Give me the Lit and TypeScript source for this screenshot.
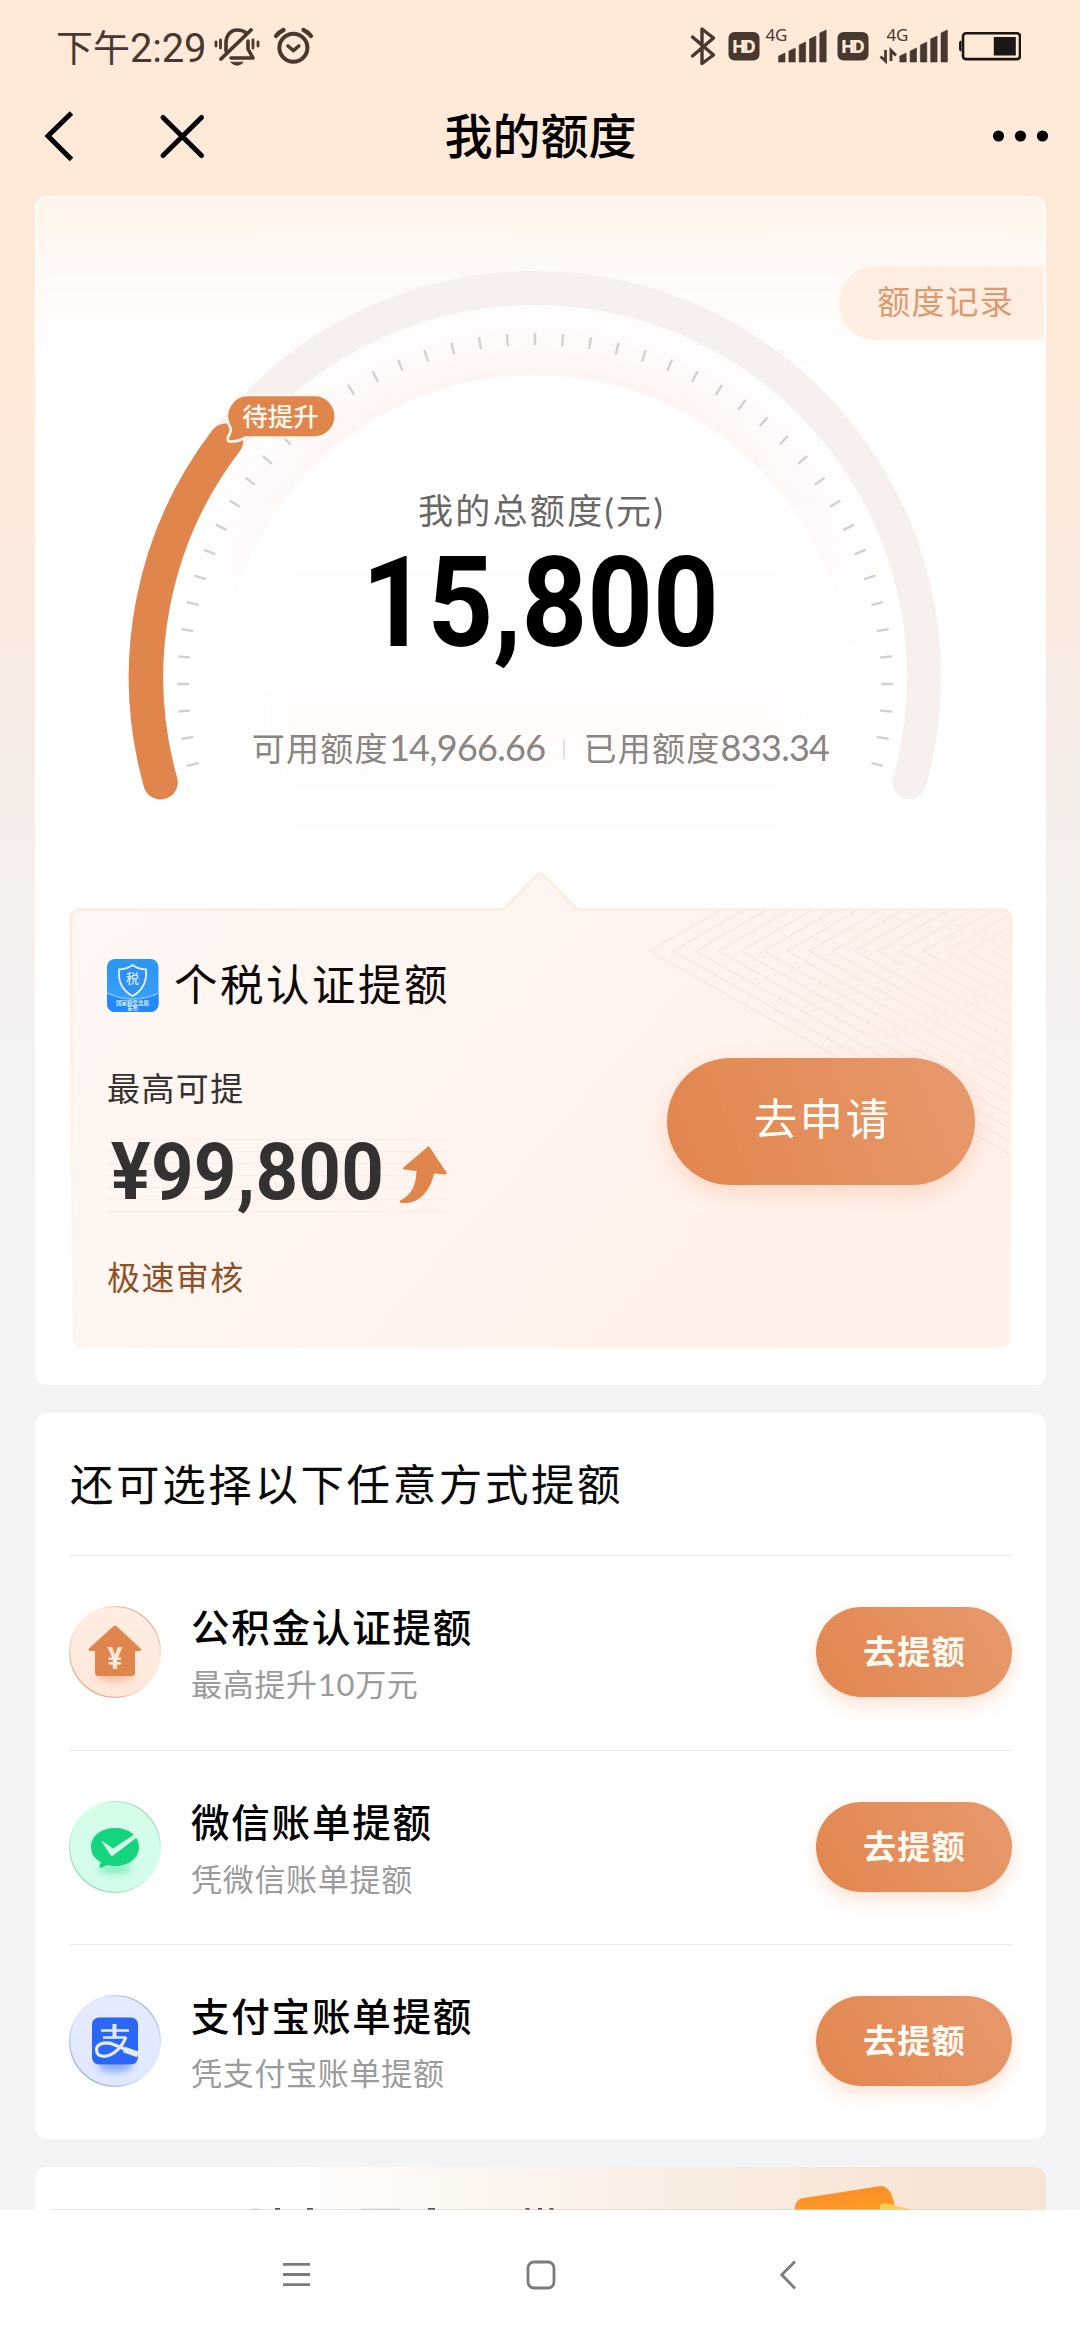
import { LitElement, html, svg, css } from "lit";
import { customElement, property } from "lit/decorators.js";

interface Way {
  icon: "house" | "wechat" | "alipay";
  title: string;
  desc: string;
}

const WAYS: Way[] = [
  { icon: "house", title: "公积金认证提额", desc: "最高提升10万元" },
  { icon: "wechat", title: "微信账单提额", desc: "凭微信账单提额" },
  { icon: "alipay", title: "支付宝账单提额", desc: "凭支付宝账单提额" },
];

const CJK = css`"Noto Sans CJK SC", sans-serif`;

@customElement("status-bar")
class StatusBar extends LitElement {
  static styles = css`
    :host {
      display: flex;
      justify-content: space-between;
      align-items: center;
      height: 94px;
      padding: 0 59px 0 56px;
      color: #47392f;
    }
    .left,
    .right {
      display: flex;
      align-items: center;
    }
    .time {
      display: flex;
      align-items: baseline;
      width: 150px;
      white-space: nowrap;
      font: 400 37px/44px ${CJK};
    }
    .digits {
      font: 400 40px/44px Roboto, sans-serif;
      letter-spacing: -0.2px;
    }
    svg {
      display: block;
    }
    .hd {
      font: 800 17px Inter, sans-serif;
    }
    .net {
      font: 400 17px "Noto Sans", sans-serif;
    }
  `;

  bars(x: number) {
    return [0, 1, 2, 3, 4].map((i) => {
      const l = x + i * 10.3;
      const top = [56, 51, 45, 39, 33][i];
      return svg`<path d="M${l} 63V${top + 1}L${l + 6.4} ${top - 2}V63Z"
        fill="currentColor" stroke="currentColor" stroke-width="0.6" stroke-linejoin="round"/>`;
    });
  }

  render() {
    return html`
      <div class="left">
        <div class="time">下午<span class="digits">2:29</span></div>
        <svg width="112" height="48" viewBox="206 24 112 48" fill="none" stroke="currentColor" stroke-linecap="round">
          <path d="M226 52V44C226 36 231 31 237 31Q243 31 246 34" stroke-width="3.6" />
          <path d="M248 42V50L253 59H231" stroke-width="3.6" stroke-linejoin="round" />
          <path d="M251 31L221 60" stroke-width="3.8" />
          <path d="M231 63.5Q237 69 243 63.5Z" fill="currentColor" stroke-width="1" />
          <path d="M216 43v4M220.5 41v8M258 43v4M253 41v8" stroke-width="2.8" />
          <circle cx="293.4" cy="48.7" r="14" stroke-width="4" />
          <path d="M288 47l5.4 4.6 5.4-4.6" stroke-width="3.6" stroke-linejoin="round" />
          <path d="M276 37q3-4 7.5-6M311 37q-3-4-7.5-6" stroke-width="4.2" />
        </svg>
      </div>
      <div class="right">
        <svg width="336" height="48" viewBox="684 24 336 48">
          <path
            d="M691.5 38L712.5 56L701 64.5V30L712.5 39L691.5 57"
            fill="none"
            stroke="currentColor"
            stroke-width="3.4"
            stroke-linejoin="round"
            stroke-linecap="round"
          />
          <rect x="727.5" y="33" width="31" height="28.5" rx="6" fill="currentColor" />
          <text class="hd" x="743" y="53.5" text-anchor="middle" textLength="23" fill="#ffe9d8">HD</text>
          <text class="net" x="764.5" y="42" textLength="22" fill="currentColor">4G</text>
          ${this.bars(777.6)}
          <rect x="836.5" y="33" width="31" height="28.5" rx="6" fill="currentColor" />
          <text class="hd" x="852" y="53.5" text-anchor="middle" textLength="23" fill="#ffe9d8">HD</text>
          <text class="net" x="885.5" y="42" textLength="22" fill="currentColor">4G</text>
          <path
            d="M884.5 51V62L879.5 57.5M884.5 62V51M890 62V51.5L895 56.5"
            fill="none"
            stroke="currentColor"
            stroke-width="2.8"
          />
          ${this.bars(898.8)}
          <rect x="962" y="34.3" width="57" height="25.8" rx="3" fill="none" stroke="#1c1511" stroke-width="2.6" />
          <path d="M960.5 41.5q-2.5 0-2.5 3v5q0 3 2.5 3z" fill="#1c1511" />
          <rect x="992.8" y="38" width="22" height="18.5" fill="#1a1714" />
        </svg>
      </div>
    `;
  }
}

@customElement("title-bar")
class TitleBar extends LitElement {
  static styles = css`
    :host {
      display: grid;
      grid-template-columns: 1fr auto 1fr;
      align-items: center;
      height: 83px;
      padding: 0 31px 0 40px;
      color: #000;
    }
    h1 {
      margin: 0;
      font: 500 48px/60px ${CJK};
      padding: 0 8px 5px 0;
    }
    .more {
      justify-self: end;
    }
    svg {
      display: block;
    }
  `;
  render() {
    return html`
      <svg width="170" height="60" viewBox="40 106 170 60" fill="none" stroke="#000" stroke-width="5">
        <path d="M71.5 113L48 136L71.5 159.5" />
        <path d="M163 117.5L201.5 155.5M201.5 117.5L163 155.5" stroke-linecap="round" />
      </svg>
      <h1>我的额度</h1>
      <svg class="more" width="58" height="20" viewBox="990 126 58 20">
        <circle cx="997.5" cy="136" r="5.6" />
        <circle cx="1019.5" cy="136" r="5.6" />
        <circle cx="1041.5" cy="136" r="5.6" />
      </svg>
    `;
  }
}

@customElement("quota-gauge")
class QuotaGauge extends LitElement {
  static styles = css`
    :host {
      display: grid;
      height: 672px;
      position: relative;
    }
    .dial,
    .info {
      grid-area: 1 / 1;
    }
    .dial {
      display: block;
    }
    .badge {
      font: 500 25.5px ${CJK};
    }
    .info {
      display: flex;
      flex-direction: column;
      align-items: center;
      padding-top: 294px;
    }
    .label {
      font: 400 35px/40px Lato, ${CJK};
      letter-spacing: 2.3px;
      color: #6b6765;
      padding-left: 2px;
    }
    .total {
      margin-top: 13px;
      font: 700 126px/120px Roboto, sans-serif;
      transform: scaleX(0.91);
      color: #000;
    }
    .split {
      display: flex;
      align-items: center;
      margin-top: 64px;
      font: 400 33px/40px ${CJK};
      letter-spacing: 1.3px;
      color: #8a8583;
    }
    .num {
      font: 400 36px/40px Lato, sans-serif;
      letter-spacing: -0.7px;
    }
    .bar {
      width: 2px;
      height: 19px;
      margin: 4px 18px 0 18px;
      background: #e6e1df;
    }
    .record {
      position: absolute;
      right: 2px;
      top: 70px;
      height: 74px;
      padding: 0 30px 0 38px;
      border-radius: 37px 0 0 37px;
      background: #ffeee1;
      color: #dd9a6e;
      font: 400 33px/68px ${CJK};
      letter-spacing: 1.2px;
    }
  `;

  arc(r: number, from: number, to: number) {
    const p = (a: number) => {
      const t = (a * Math.PI) / 180;
      return `${535 + r * Math.cos(t)} ${677 - r * Math.sin(t)}`;
    };
    return `M${p(from)}A${r} ${r} 0 ${from - to > 180 ? 1 : 0} 1 ${p(to)}`;
  }

  render() {
    const ticks = [];
    for (let i = -3; i <= 43; i++) {
      const deg = 180 - i * 4.5;
      const t = (deg * Math.PI) / 180;
      const cx = 535 + 352 * Math.cos(t);
      const cy = 684 - 345 * Math.sin(t);
      const dx = 5 * Math.cos(t);
      const dy = -5 * Math.sin(t);
      ticks.push(svg`<path d="M${cx - dx} ${cy - dy}L${cx + dx} ${cy + dy}"/>`);
    }
    return html`
      <svg class="dial" width="1011" height="672" viewBox="35 196 1011 672">
        <defs>
          <radialGradient id="glow" gradientUnits="userSpaceOnUse" cx="535" cy="690" r="372">
            <stop offset="0.845" stop-color="#fff4f3" />
            <stop offset="1" stop-color="#fffdfc" />
          </radialGradient>
          <linearGradient id="fade" x1="0" y1="0" x2="0" y2="1">
            <stop offset="0.25" stop-color="#fff" />
            <stop offset="0.85" stop-color="#000" />
          </linearGradient>
          <mask id="upper"><rect x="150" y="300" width="780" height="420" fill="url(#fade)" /></mask>
          <linearGradient id="sides" x1="0" y1="0" x2="1" y2="0">
            <stop offset="0" stop-color="#fff" stop-opacity="0" />
            <stop offset="0.15" stop-color="#fffcfa" />
            <stop offset="0.85" stop-color="#fffcfa" />
            <stop offset="1" stop-color="#fff" stop-opacity="0" />
          </linearGradient>
          <linearGradient id="fall" x1="0" y1="0" x2="0" y2="1">
            <stop offset="0" stop-color="#000" />
            <stop offset="0.6" stop-color="#fff" />
            <stop offset="1" stop-color="#000" />
          </linearGradient>
          <mask id="lower"><rect x="190" y="540" width="690" height="310" fill="url(#fall)" /></mask>
        </defs>
        <path d="M163 677A372 372 0 0 1 907 677V720H163Z" fill="url(#glow)" mask="url(#upper)" />
        <circle cx="535" cy="690" r="315" fill="#fff" />
        <rect x="190" y="540" width="690" height="310" fill="url(#sides)" mask="url(#lower)" />
        <path d=${this.arc(389, 195.7, -15.7)} fill="none" stroke="#f8f0ee" stroke-width="34" stroke-linecap="round" />
        <g stroke="#d3d0cf" stroke-width="2.4" stroke-linecap="round">${ticks}</g>
        <path d=${this.arc(389, 195.7, 142.6)} fill="none" stroke="#e0864d" stroke-width="34.5" stroke-linecap="round" />
        <path
          d="M248 395H314.5A21 21 0 0 1 314.5 437.5H246Q237 442 229 441.5Q226 440 230 433Q232 429 229 425A21 21 0 0 1 248 395Z"
          fill="#e0864d"
          stroke="#fff8ee"
          stroke-width="2.6"
          stroke-linejoin="round"
        />
        <text class="badge" x="280.5" y="425.5" text-anchor="middle" fill="#fff8ee">待提升</text>
      </svg>
      <div class="info">
        <div class="label">我的总额度(元)</div>
        <div class="total">15,800</div>
        <div class="split">
          <span>可用额度<span class="num">14,966.66</span></span>
          <span class="bar"></span>
          <span>已用额度<span class="num">833.34</span></span>
        </div>
      </div>
      <div class="record">额度记录</div>
    `;
  }
}

@customElement("tax-offer")
class TaxOffer extends LitElement {
  static styles = css`
    :host {
      display: grid;
      height: 482px;
      margin: 0 32px 0 34px;
    }
    .frame,
    .body {
      grid-area: 1 / 1;
    }
    .frame {
      display: block;
    }
    .body {
      display: flex;
      justify-content: space-between;
      padding: 88px 39px 0 38px;
    }
    .head {
      display: flex;
      align-items: center;
      height: 60px;
      gap: 15px;
    }
    .head svg {
      display: block;
      margin-top: -1px;
    }
    .title {
      font: 400 43.5px/56px ${CJK};
      letter-spacing: 2.5px;
      color: #0b0807;
      margin-top: -6px;
    }
    .small {
      font: 400 33px/40px ${CJK};
      letter-spacing: 1.4px;
      color: #353130;
      margin-top: 51px;
    }
    .price {
      display: flex;
      align-items: center;
      width: 340px;
      height: 73px;
      margin-top: 32px;
      background: repeating-linear-gradient(#fdede7 0 1.5px, transparent 1.5px 12px);
    }
    .amount {
      flex: 1;
      min-width: 0;
      white-space: nowrap;
      padding: 0 0 7px 4px;
      transform: scaleX(0.93);
      transform-origin: left;
      font: 700 80px/66px Roboto, sans-serif;
      letter-spacing: 0.3px;
      color: #343230;
    }
    .price svg {
      flex: none;
      margin-bottom: 2px;
    }
    .fast {
      font: 400 33px/40px ${CJK};
      letter-spacing: 1.4px;
      color: #8b5229;
      margin-top: 44px;
    }
    .apply {
      width: 308px;
      height: 127px;
      box-sizing: border-box;
      padding-left: 3px;
      margin-top: 102px;
      border-radius: 64px;
      background: linear-gradient(68deg, #e1854d, #e7996c);
      box-shadow: 0 8px 20px rgba(240, 140, 80, 0.24);
      color: #fffdf8;
      font: 400 43.5px/118px ${CJK};
      letter-spacing: 2.4px;
      text-align: center;
    }
    .seal {
      font: 500 13px ${CJK};
    }
    .tiny {
      font: 700 5.5px ${CJK};
    }
  `;
  render() {
    const lines = [];
    for (let i = 0; i < 16; i++) {
      const x = 650 + i * 22.8;
      lines.push(svg`<path d="M${x + 69.3} 911L${x} 951L${x + 400} ${951 + 226}"/>`);
    }
    return html`
      <svg class="frame" width="945" height="482" viewBox="69 868 945 482">
        <defs>
          <linearGradient id="fill" x1="0" y1="0" x2="1" y2="0.45">
            <stop offset="0" stop-color="#fff7f4" />
            <stop offset="0.45" stop-color="#fff5f0" />
            <stop offset="1" stop-color="#fff0e8" />
          </linearGradient>
          <linearGradient id="edge" x1="0" y1="0" x2="0" y2="1">
            <stop offset="0.05" stop-color="#fdebdc" />
            <stop offset="0.6" stop-color="#fff3ea" />
            <stop offset="1" stop-color="#fff3ea" stop-opacity="0" />
          </linearGradient>
          <clipPath id="box"><rect x="72" y="911" width="937" height="436" rx="8" /></clipPath>
        </defs>
        <path
          d="M81 909.5H500Q504 909.5 506 907L535 877Q540 870.5 545 877L575 907Q577 909.5 581 909.5H1001Q1011 909.5 1011 919.5L1009.5 1338Q1009.5 1347.5 999 1347.5H82Q72.5 1347.5 72.5 1338L71 919.5Q71 909.5 81 909.5Z"
          fill="url(#fill)"
          stroke="url(#edge)"
          stroke-width="2.5"
        />
        <g clip-path="url(#box)" fill="none" stroke="#f5e7e3" stroke-width="1.3">${lines}</g>
      </svg>
      <div class="body">
        <div>
          <div class="head">
            <svg width="52" height="53" viewBox="0 0 52 53">
              <defs>
                <linearGradient id="blue" x1="0" y1="0" x2="0" y2="1">
                  <stop offset="0" stop-color="#2a97f2" />
                  <stop offset="1" stop-color="#3da0fb" />
                </linearGradient>
                <clipPath id="app"><rect width="51.5" height="53" rx="8" /></clipPath>
              </defs>
              <g clip-path="url(#app)">
                <rect width="52" height="53" fill="url(#blue)" />
                <path d="M0 34Q26 46 52 34V53H0Z" fill="#2388fa" />
                <path d="M0 34Q26 46 52 34" fill="none" stroke="#7cc4fb" stroke-width="1.5" />
              </g>
              <path
                d="M25.5 6Q32 10.5 39 10.5Q40.5 29 25.5 37Q10.5 29 12 10.5Q19 10.5 25.5 6Z"
                fill="#2e90f5"
                stroke="#e6f5ff"
                stroke-width="1.8"
              />
              <text class="seal" x="25.5" y="24" text-anchor="middle" fill="#d4edff">税</text>
              <text class="tiny" x="25.5" y="45.5" text-anchor="middle" fill="#d4edff">国家税务总局</text>
              <text class="tiny" x="25.5" y="51" text-anchor="middle" fill="#d4edff">发布</text>
            </svg>
            <div class="title">个税认证提额</div>
          </div>
          <div class="small">最高可提</div>
          <div class="price">
            <span class="amount">¥99,800</span>
            <svg width="48" height="60" viewBox="399 1145 48 60">
              <path
                d="M427.5 1147Q428.5 1145.5 429.5 1147L446.5 1172.5Q447 1175 444.5 1174.5L434 1173.5C431 1188 421 1205 401 1203Q398.5 1201.5 401 1200C411 1195 416 1186 416.5 1171L404.5 1169.5Q402.5 1169 403.5 1167.5Z"
                fill="#e0864d"
              />
            </svg>
          </div>
          <div class="fast">极速审核</div>
        </div>
        <div class="apply">去申请</div>
      </div>
    `;
  }
}

@customElement("way-icon")
class WayIcon extends LitElement {
  static styles = css`
    :host {
      display: block;
      width: 92px;
      height: 94px;
    }
    svg {
      display: block;
    }
    .yen {
      font: 700 31px Roboto, sans-serif;
    }
  `;
  @property() kind = "house";

  glyph() {
    if (this.kind === "house") {
      return svg`
        <ellipse cx="46" cy="71" rx="18" ry="6" fill="#f0a57a" opacity="0.6" filter="url(#soft)"/>
        <path d="M43.5 22Q46 19.5 48.5 22L71.5 43.5Q73 46 70 46H66V67.5Q66 71 62.5 71H29.5Q26 71 26 67.5V46H21.5Q18.5 46 20 43.5Z" fill="#e0864d"/>
        <text class="yen" x="46" y="63.5" text-anchor="middle" textLength="15" lengthAdjust="spacingAndGlyphs" fill="#ffe9dc">¥</text>`;
    }
    if (this.kind === "wechat") {
      return svg`
        <ellipse cx="46" cy="69" rx="17" ry="5" fill="#35dc92" opacity="0.5" filter="url(#soft)"/>
        <path d="M46 28C60 28 70 36 70 47C70 58 60 66 46 66Q42 66 38.5 65Q35 66 32 68Q30 68 30.5 66L32 62.5Q22 57 22 47C22 36 32 28 46 28Z" fill="#15d47e"/>
        <path d="M33 42Q32 40.5 34 41.5L44 48.5L66 34Q68 36.5 66.5 38.5L44 55.5Q42.5 56.5 41.5 55Z" fill="#d6ffea"/>`;
    }
    return svg`
      <ellipse cx="46" cy="72" rx="17" ry="6" fill="#3f75f5" opacity="0.55" filter="url(#soft)"/>
      <rect x="23" y="23.5" width="46" height="47" rx="7" fill="#2b67f6"/>
      <g fill="none" stroke="#e4ebff">
        <path d="M32 36.5H60M34 43.5H57" stroke-width="2.4"/>
        <path d="M45.5 30V43" stroke-width="4"/>
        <path d="M57 43Q53 53 46 58C38 64 28 64 27.5 56C27.5 49 37 47 46 51Q57 56 69 60" stroke-width="3.2"/>
        <path d="M55 55.5L69 60.5" stroke-width="6"/>
      </g>`;
  }

  render() {
    const c = {
      house: ["#ffeee3", "#ffe8db", "#dba385"],
      wechat: ["#d6ffe9", "#d2fdeb", "#8fd1b8"],
      alipay: ["#e6ecff", "#e0e8ff", "#8ea9e0"],
    }[this.kind as Way["icon"]];
    return html`
      <svg width="92" height="94" viewBox="0 0 92 94">
        <defs>
          <filter id="soft" x="-50%" y="-100%" width="200%" height="300%"><feGaussianBlur stdDeviation="3.5" /></filter>
          <linearGradient id="disc" x1="0" y1="0" x2="0" y2="1">
            <stop offset="0" stop-color=${c[0]} />
            <stop offset="1" stop-color=${c[1]} />
          </linearGradient>
          <linearGradient id="rim" x1="0.1" y1="1" x2="0.9" y2="0">
            <stop offset="0.05" stop-color=${c[2]} />
            <stop offset="0.45" stop-color=${c[1]} />
            <stop offset="0.7" stop-color=${c[1]} />
            <stop offset="0.95" stop-color=${c[2]} />
          </linearGradient>
        </defs>
        <circle cx="46" cy="47" r="45.3" fill="url(#disc)" stroke="url(#rim)" stroke-width="1.3" />
        ${this.glyph()}
      </svg>
    `;
  }
}

@customElement("way-list")
class WayList extends LitElement {
  static styles = css`
    :host {
      display: flex;
      flex-direction: column;
      height: 726px;
      padding: 0 34px;
      box-sizing: border-box;
      border-radius: 12px;
      background: #fff;
    }
    .head {
      height: 142px;
      font: 400 43.5px/139px ${CJK};
      letter-spacing: 2.6px;
      color: #0a0a0a;
      padding-left: 1px;
    }
    .row {
      display: flex;
      align-items: center;
      height: 194.5px;
      box-sizing: border-box;
      border-top: 1px solid #ebebeb;
      padding-bottom: 1px;
    }
    .text {
      flex: 1;
      padding: 7px 0 0 30px;
    }
    .title {
      font: 500 38.5px/57px ${CJK};
      letter-spacing: 1.8px;
      color: #000;
    }
    .desc {
      font: 400 31px/60px Lato, ${CJK};
      letter-spacing: 0.7px;
      color: #9b9b9b;
    }
    .go {
      width: 196px;
      height: 90px;
      box-sizing: border-box;
      padding-left: 1px;
      border-radius: 45px;
      background: linear-gradient(60deg, #e2864f, #e7996c);
      box-shadow: 0 8px 18px rgba(240, 140, 80, 0.24);
      color: #fffaf2;
      font: 600 33px/86px ${CJK};
      letter-spacing: 1.3px;
      text-align: center;
    }
  `;
  render() {
    return html`
      <div class="head">还可选择以下任意方式提额</div>
      ${WAYS.map(
        (w) => html`
          <div class="row">
            <way-icon .kind=${w.icon}></way-icon>
            <div class="text">
              <div class="title">${w.title}</div>
              <div class="desc">${w.desc}</div>
            </div>
            <div class="go">去提额</div>
          </div>
        `
      )}
    `;
  }
}

@customElement("app-root")
class AppRoot extends LitElement {
  static styles = css`
    :host {
      display: flex;
      flex-direction: column;
      width: 1080px;
      height: 2340px;
      overflow: hidden;
      background: linear-gradient(#ffe9d9 0, #ffe9d9 380px, #fbeade 560px, #f6eeea 820px, #f3f4f6 1180px, #f2f4f6 100%);
    }
    .page {
      flex: 1;
      min-height: 0;
      overflow: hidden;
      display: flex;
      flex-direction: column;
      gap: 28px;
      padding: 19px 34px 0 35px;
    }
    .quota {
      flex: none;
      box-sizing: border-box;
      height: 1189px;
      border-radius: 12px;
      box-shadow: inset 0 0 0 2px rgba(255, 255, 255, 0.8);
      background: linear-gradient(#fff4e8 0, #fff8f4 60px, #fffcfa 120px, #fff 180px);
    }
    way-list {
      flex: none;
    }
    .promo {
      flex: none;
      height: 200px;
      border-radius: 12px;
      background: linear-gradient(90deg, #fff 22%, #fbf1e8 55%, #f6e5d4 88%);
    }
    .promo svg {
      display: block;
    }
    .system {
      flex: none;
      height: 130px;
      background: #fff;
    }
    .system svg {
      display: block;
    }
  `;
  render() {
    return html`
      <status-bar></status-bar>
      <title-bar></title-bar>
      <main class="page">
        <section class="quota">
          <quota-gauge></quota-gauge>
          <tax-offer></tax-offer>
        </section>
        <way-list></way-list>
        <section class="promo">
          <svg width="1011" height="43" viewBox="35 2167 1011 43">
            <defs>
              <linearGradient id="wallet" x1="0" y1="0" x2="0.3" y2="1">
                <stop offset="0" stop-color="#f78a2c" />
                <stop offset="1" stop-color="#ff9a22" />
              </linearGradient>
            </defs>
            <path
              d="M794 2212Q795 2201 801 2198.5L881 2186Q887 2186 891 2194Q895 2201 894.5 2212Z"
              fill="url(#wallet)"
            />
            <path d="M880 2212V2206Q881 2202.5 887 2203.5L922 2212Z" fill="#ffcf55" />
            <path
              d="M275 2209.2h5M307 2209.2h6M428 2209.2h7M525.5 2209.2h4M538 2209.2h4M549.5 2209.2h4"
              stroke="#222"
              stroke-width="2"
            />
            <path d="M252 2209.4h7M361 2209.4h39" stroke="#c9c5c2" stroke-width="1.2" />
            <path d="M50 2209.7H1030" stroke="#d6d3d0" stroke-width="0.7" />
          </svg>
        </section>
      </main>
      <footer class="system">
        <svg width="1080" height="130" viewBox="0 2210 1080 130" fill="none" stroke="#7b7b7b" stroke-width="2.8">
          <path d="M283 2264.3H310M283 2274.5H310M283 2284.7H310" />
          <rect x="528" y="2262" width="26" height="26" rx="6" />
          <path d="M795 2261.5L781.8 2274.7L795 2288.5" />
        </svg>
      </footer>
    `;
  }
}
